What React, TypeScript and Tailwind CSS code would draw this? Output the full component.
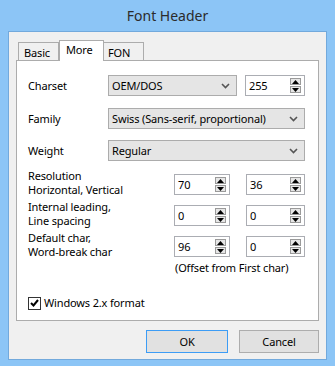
import { ReactNode } from 'react';

const font = { fontFamily: '"Noto Sans", "Open Sans", sans-serif' };

function Chevron() {
  return (
    <svg width="9" height="6" viewBox="0 0 9 6" className="shrink-0">
      <path d="M1 1 L4.5 4.5 L8 1" fill="none" stroke="#555" strokeWidth="1.6" />
    </svg>
  );
}

function Select({ value, className }: { value: string; className: string }) {
  return (
    <div
      className={`h-[21px] flex items-center justify-between pl-[3px] pr-[6px] border border-[#acacac] bg-[#e5e5e5] ${className}`}
    >
      <span>{value}</span>
      <Chevron />
    </div>
  );
}

function SpinArrow({ up }: { up?: boolean }) {
  return (
    <div className="w-[11px] h-[7px] flex items-center justify-center border border-[#9a9a9a] bg-[#e6e6e6]">
      <svg width="7" height="4" viewBox="0 0 7 4">
        <path d={up ? 'M0 4 L3.5 0 L7 4 Z' : 'M0 0 L3.5 4 L7 0 Z'} fill="#000" />
      </svg>
    </div>
  );
}

function Spin({ value, className }: { value: string; className: string }) {
  return (
    <div
      className={`h-[21px] shrink-0 flex items-center justify-between pl-[3px] pr-[3px] border border-[#abadb3] bg-white ${className}`}
    >
      <span>{value}</span>
      <div className="flex flex-col gap-[1px]">
        <SpinArrow up />
        <SpinArrow />
      </div>
    </div>
  );
}

function Row({ label, children, className }: { label: string; children: ReactNode; className: string }) {
  return (
    <div className={`flex items-center h-[21px] ${className}`}>
      <div className="w-[80px] shrink-0 whitespace-nowrap">{label}</div>
      {children}
    </div>
  );
}

function Row2({ lines, values }: { lines: [string, string]; values: [string, string] }) {
  return (
    <div className="flex items-start h-[21px] mt-[10px]">
      <div className="w-[146px] shrink-0 -mt-[5px] flex flex-col whitespace-nowrap">
        <span>{lines[0]}</span>
        <span>{lines[1]}</span>
      </div>
      <Spin value={values[0]} className="w-[56px]" />
      <Spin value={values[1]} className="ml-[16px] w-[59px]" />
    </div>
  );
}

export default function App() {
  return (
    <div
      className="w-[335px] h-[366px] bg-[#8cc5f6] flex flex-col overflow-hidden text-[11px] leading-[14px] tracking-[-0.15px] text-black"
      style={font}
    >
      <div className="h-[31px] shrink-0 flex items-center justify-center text-[14px] tracking-normal text-[#2b2b2b] pt-[1px]">
        Font Header
      </div>
      <div className="mx-[8px] h-[329px] shrink-0 border border-[#72a9dc] bg-[#f0f0f0] flex flex-col px-[7px]">
        {/* tabs */}
        <div className="flex items-end h-[28px] shrink-0 pl-[2px]">
          <div className="w-[41px] h-[18px] border border-b-0 border-[#acacac] bg-[#f0f0f0] flex items-center pl-[5px] pt-[2px]">
            Basic
          </div>
          <div className="w-[45px] h-[21px] -mb-[1px] relative z-10 border border-b-0 border-[#acacac] bg-white pl-[6px] pt-[2px]">
            More
          </div>
          <div className="w-[40px] h-[18px] border border-b-0 border-l-0 border-[#acacac] bg-[#f0f0f0] flex items-center pl-[4px] pt-[2px]">
            FON
          </div>
        </div>
        {/* panel */}
        <div className="h-[261px] shrink-0 border border-[#acacac] bg-white flex flex-col pl-[11px] pr-[13px] pt-[14px]">
          <Row label="Charset" className="">
            <Select value="OEM/DOS" className="w-[129px]" />
            <Spin value="255" className="ml-[8px] w-[60px]" />
          </Row>
          <Row label="Family" className="mt-[12px]">
            <Select value="Swiss (Sans-serif, proportional)" className="w-[197px]" />
          </Row>
          <Row label="Weight" className="mt-[11px]">
            <Select value="Regular" className="w-[197px]" />
          </Row>
          <div className="h-[3px] shrink-0" />
          <Row2 lines={['Resolution', 'Horizontal, Vertical']} values={['70', '36']} />
          <Row2 lines={['Internal leading,', 'Line spacing']} values={['0', '0']} />
          <Row2 lines={['Default char,', 'Word-break char']} values={['96', '0']} />
          <div className="mt-[4px] ml-[147px]">(Offset from First char)</div>
          <div className="mt-[21px] flex items-center">
            <div className="w-[13px] h-[13px] border border-[#333] bg-white flex items-center justify-center">
              <svg width="9" height="8" viewBox="0 0 9 8">
                <path d="M1 4 L3.5 6.5 L8 1" fill="none" stroke="#000" strokeWidth="2" />
              </svg>
            </div>
            <span className="ml-[3px]">Windows 2.x format</span>
          </div>
        </div>
        {/* buttons */}
        <div className="flex justify-end gap-[11px] mt-[9px]">
          <button className="w-[82px] h-[23px] border border-[#3c9cf5] bg-[#e1e1e1]">OK</button>
          <button className="w-[80px] h-[23px] border border-[#adadad] bg-[#e1e1e1]">Cancel</button>
        </div>
      </div>
    </div>
  );
}
